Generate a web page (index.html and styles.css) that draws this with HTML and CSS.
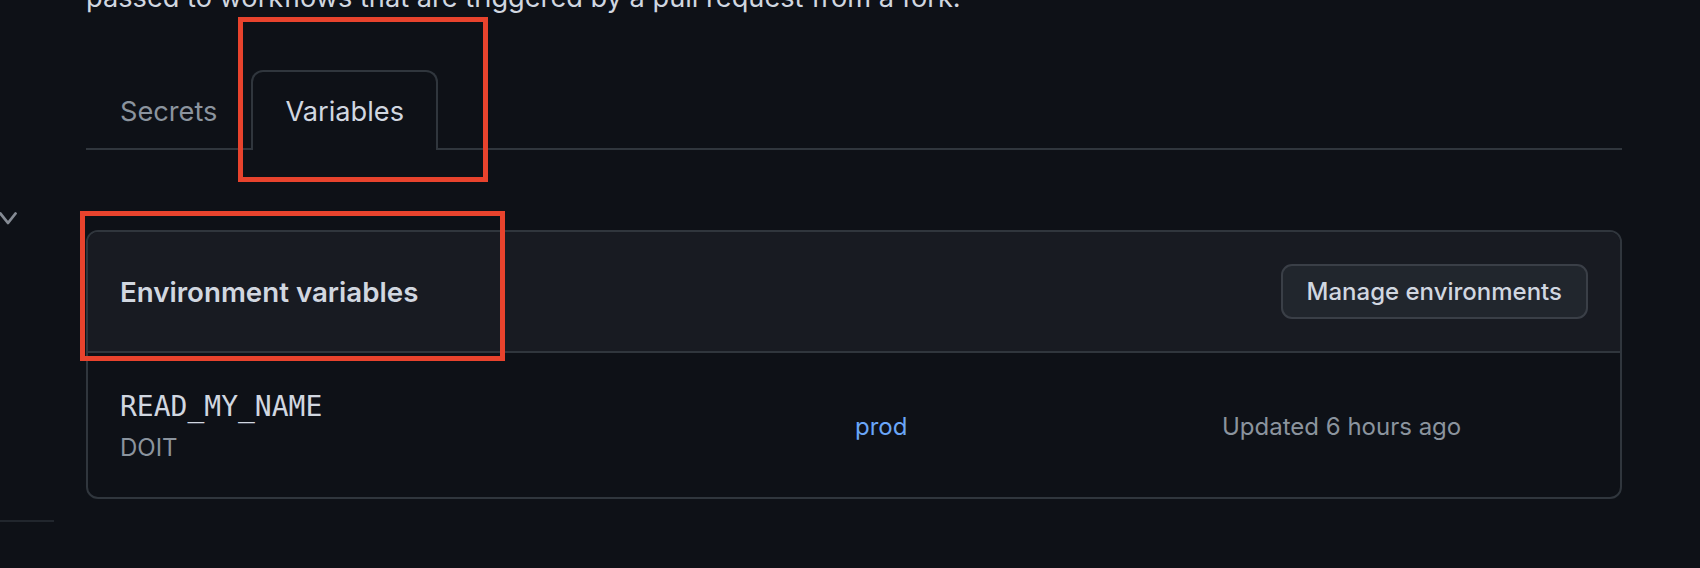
FILE: index.html
```html
<!DOCTYPE html>
<html lang="en">
<head>
<meta charset="utf-8">
<title>Actions secrets and variables</title>
<link rel="stylesheet" href="styles.css">
</head>
<body>
<div class="page">
  <aside class="sidebar">
    <div class="nav-item">
      <svg class="chevron" width="18" height="17" viewBox="0 0 18 17" aria-hidden="true">
        <polyline points="0.5,3.5 8,13 15.5,3.5" fill="none" stroke="#858b94" stroke-width="2.8" stroke-linecap="round" stroke-linejoin="round"/>
      </svg>
    </div>
    <div class="sidebar-sep"></div>
  </aside>
  <main class="main">
    <p class="intro">passed to workflows that are triggered by a pull request from a fork.</p>
    <nav class="tabs">
      <a class="tab">Secrets</a>
      <a class="tab tab-selected">Variables</a>
    </nav>
    <section class="card">
      <header class="card-header">
        <h2 class="card-title">Environment variables</h2>
        <button class="btn" type="button">Manage environments</button>
      </header>
      <div class="var-row">
        <div class="var-name">
          <div class="var-key">READ_MY_NAME</div>
          <div class="var-value">DOIT</div>
        </div>
        <a class="var-env">prod</a>
        <div class="var-updated">Updated 6 hours ago</div>
      </div>
    </section>
  </main>
  <div class="annot annot-tab"></div>
  <div class="annot annot-header"></div>
</div>
</body>
</html>
```

FILE: styles.css
```css
* { box-sizing: border-box; }

html, body {
  margin: 0;
  padding: 0;
  background: #0e1117;
}

body {
  font-family: Inter, "Noto Sans", "Liberation Sans", sans-serif;
  color: #d1d7e0;
}

.page {
  position: relative;
  width: 1700px;
  height: 568px;
  overflow: hidden;
  display: flex;
  gap: 32px;
}

.sidebar {
  width: 54px;
  flex: 0 0 54px;
  display: flex;
  flex-direction: column;
}

.nav-item {
  margin-top: 210px;
  height: 17px;
}

.chevron { display: block; }

.sidebar-sep {
  margin-top: 293px;
  height: 2px;
  background: #21262d;
}

.main {
  width: 1536px;
  flex: 0 0 1536px;
}

.intro {
  margin: -22px 0 0;
  font-size: 27.2px;
  line-height: 40px;
  color: #d1d7e0;
  white-space: nowrap;
}

.tabs {
  margin-top: 52px;
  display: flex;
  border-bottom: 2px solid #30363d;
}

.tab {
  height: 80px;
  margin-bottom: -2px;
  padding: 0 32px;
  display: flex;
  align-items: center;
  border: 2px solid transparent;
  border-bottom: 0;
  border-radius: 12px 12px 0 0;
  font-size: 27.2px;
  color: #8b949e;
}

.tab-selected {
  border-color: #30363d;
  background: #0e1117;
  color: #d1d7e0;
}

.card {
  margin-top: 80px;
  border: 2px solid #30363d;
  border-radius: 12px;
  overflow: hidden;
}

.card-header {
  display: flex;
  align-items: center;
  justify-content: space-between;
  padding: 32px;
  background: #181b22;
  border-bottom: 2px solid #30363d;
}

.card-title {
  margin: 0;
  font-size: 27.7px;
  font-weight: 600;
  color: #d1d7e0;
}

.btn {
  height: 55px;
  padding: 0 24px;
  background: #21262d;
  border: 2px solid #3a3f47;
  border-radius: 11px;
  font-family: inherit;
  font-size: 24px;
  font-weight: 500;
  color: #d1d7e0;
}

.var-row {
  display: grid;
  grid-template-columns: 735px 367px 1fr;
  align-items: center;
  padding: 33px 32px 31px;
}

.var-key {
  font-family: "DejaVu Sans Mono", "Liberation Mono", monospace;
  font-size: 28px;
  line-height: 42px;
  color: #d1d7e0;
}

.var-value {
  padding-top: 2px;
  font-size: 24px;
  line-height: 36px;
  color: #8b949e;
}

.var-env {
  font-size: 24px;
  color: #6aa6f8;
}

.var-updated {
  font-size: 24px;
  color: #8b949e;
}

.annot {
  position: absolute;
  border: 5px solid #e8432d;
}

.annot-tab {
  left: 238px;
  top: 17px;
  width: 250px;
  height: 165px;
}

.annot-header {
  left: 80px;
  top: 211px;
  width: 425px;
  height: 150px;
}
```
